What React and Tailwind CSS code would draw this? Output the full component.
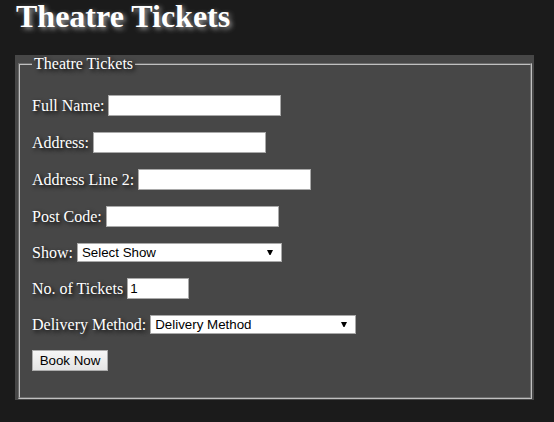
import { useState } from 'react';

const labelCls = "leading-[18px] [text-shadow:2px_2px_4px_#000]";
const inputCls = "h-[21px] border border-[#a9a9a9] bg-white px-[2px] text-[13.33px] leading-[17px] text-black font-['Liberation_Sans',Arial,sans-serif] outline-none";

function Arrow() {
    return (
        <svg width="6" height="5" viewBox="0 0 6 5" className="absolute right-[9px] top-[7px] pointer-events-none">
            <polygon points="0,0 6,0 3.5,5 2.5,5" fill="#000" />
        </svg>
    );
}

function Row({ label, children }) {
    return (
        <div className="flex items-center gap-[4px]">
            <span className={labelCls}>{label}</span>
            {children}
        </div>
    );
}

export default function App() {
    const [tickets, setTickets] = useState('1');

    return (
        <div className="min-h-[422px] w-[554px] bg-[#1b1b1b] text-white font-['Liberation_Serif','Times_New_Roman',serif]">
            <h1 className="pl-4 text-[32px] font-bold leading-[32px] text-white [text-shadow:2px_2px_5px_#a0a0a0]">
                Theatre Tickets
            </h1>

            <div className="ml-[15px] mt-[23px] w-[519px] bg-[#474747] pl-px pb-px">
                <fieldset className="mx-[2px] border-2 border-[#c0c0c0] [border-style:groove] px-3 pb-[26px]">
                    <legend className="px-[2px] text-[16px] leading-[18.4px] [text-shadow:2px_2px_4px_#000]">Theatre Tickets</legend>

                    <div className="flex flex-col gap-4 pt-[21.6px] text-[16px] leading-[18px]">
                        <Row label="Full Name:">
                            <input type="text" className={`${inputCls} w-[173px]`} />
                        </Row>
                        <Row label="Address:">
                            <input type="text" className={`${inputCls} w-[173px]`} />
                        </Row>
                        <Row label="Address Line 2:">
                            <input type="text" className={`${inputCls} w-[173px]`} />
                        </Row>
                        <Row label="Post Code:">
                            <input type="text" className={`${inputCls} w-[173px]`} />
                        </Row>
                        <Row label="Show:">
                            <div className="relative h-[19px]">
                                <select className="h-[19px] w-[205px] appearance-none border border-[#a9a9a9] bg-white pl-[4px] text-[13.33px] leading-[17px] text-black font-['Liberation_Sans',Arial,sans-serif] outline-none">
                                    <option>Select Show</option>
                                </select>
                                <Arrow />
                            </div>
                        </Row>
                        <Row label="No. of Tickets">
                            <input
                                type="text"
                                value={tickets}
                                onChange={e => setTickets(e.target.value)}
                                className={`${inputCls} w-[62px]`}
                            />
                        </Row>
                        <Row label="Delivery Method:">
                            <div className="relative h-[19px]">
                                <select className="h-[19px] w-[206px] appearance-none border border-[#a9a9a9] bg-white pl-[4px] text-[13.33px] leading-[17px] text-black font-['Liberation_Sans',Arial,sans-serif] outline-none">
                                    <option>Delivery Method</option>
                                </select>
                                <Arrow />
                            </div>
                        </Row>
                        <div className="flex">
                            <button className="h-[21px] w-[76px] border border-[#adadad] bg-gradient-to-b from-[#f6f6f6] to-[#e4e4e4] text-[13.33px] leading-[17px] text-black font-['Liberation_Sans',Arial,sans-serif]">
                                Book Now
                            </button>
                        </div>
                    </div>
                </fieldset>
            </div>
        </div>
    );
}
